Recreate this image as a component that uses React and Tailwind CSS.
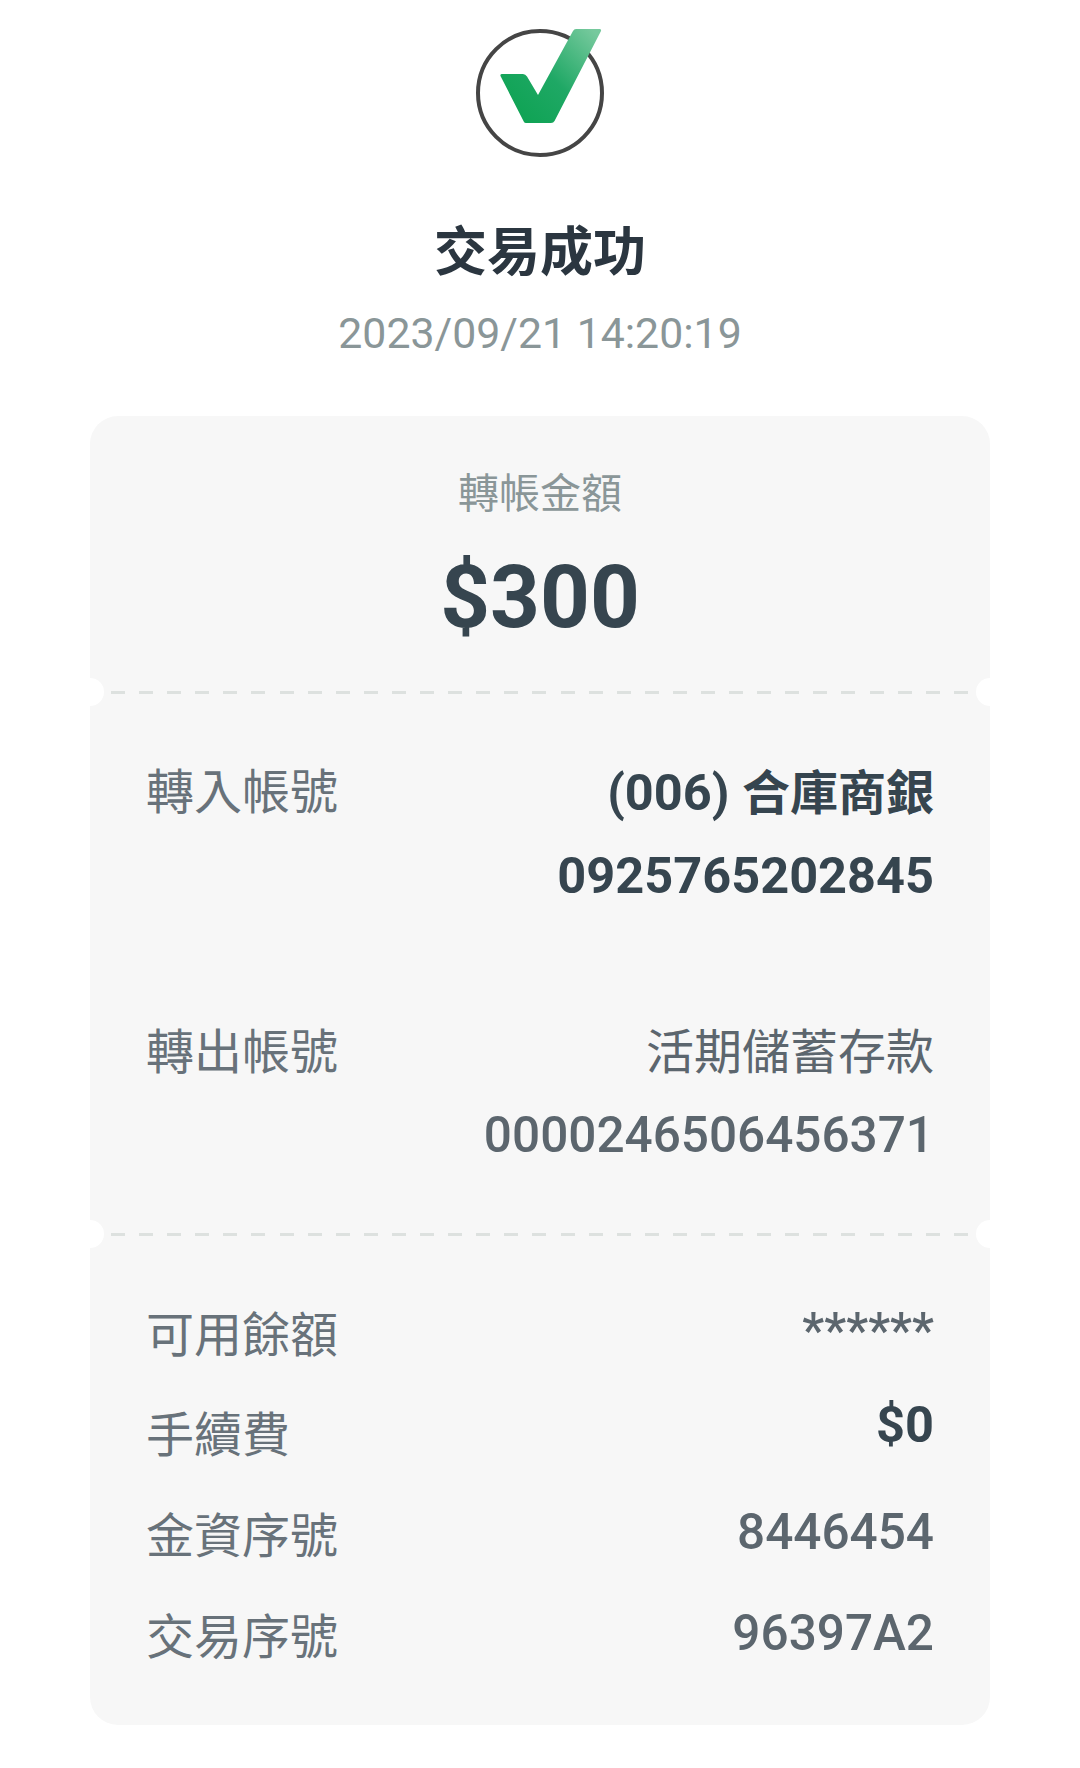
import React from "react";

const font = { fontFamily: '"Roboto", "Noto Sans CJK TC", sans-serif' };

function CheckIcon() {
  return (
    <svg width="128" height="128" viewBox="476 29 128 128" className="block">
      <defs>
        <linearGradient id="tick" x1="0.1" y1="0.85" x2="0.95" y2="0.05">
          <stop offset="0" stopColor="#0fa354" />
          <stop offset="0.45" stopColor="#1fa865" />
          <stop offset="1" stopColor="#76c99d" />
        </linearGradient>
      </defs>
      <circle cx="540" cy="93" r="62" fill="none" stroke="#454545" strokeWidth="4" />
      <path
        d="M500.5 76 Q500 74 502 74 L523 74 Q525.5 74 527 76.5 L538 95 L573 31 Q574 29 576 29 L599.5 29 Q601.5 29 601 31 L554.5 121 Q553.5 123 551 123 L526 123 Q524.5 123 524 122 Z"
        fill="url(#tick)"
      />
    </svg>
  );
}

function Divider() {
  return (
    <div className="relative h-[3px]">
      <div className="absolute left-[-1px] top-[-13px] h-[28px] w-[15px] rounded-r-full bg-white" />
      <div className="absolute right-[-1px] top-[-13px] h-[28px] w-[15px] rounded-l-full bg-white" />
      <div className="ml-[21px] mr-[22px] flex h-[3px] justify-between">
        {Array.from({ length: 31 }).map((_, i) => (
          <span key={i} className="h-[3px] w-[14px] bg-[#dde1df]" />
        ))}
      </div>
    </div>
  );
}

function Row({ label, value, bold, lift = "-mt-[5px]", className = "" }) {
  return (
    <div className={`flex items-start justify-between ${className}`}>
      <span className="text-[48px] leading-[60px] text-[#68727a]">{label}</span>
      <span className={`leading-[60px] ${lift} ${bold ? "text-[50.5px] font-bold text-[#36454f]" : "text-[49.5px] font-medium text-[#5c666e]"}`}>{value}</span>
    </div>
  );
}

export default function App() {
  return (
    <div className="flex h-[1768px] w-[1080px] flex-col items-center overflow-hidden bg-white" style={font}>
      <div className="mt-[29px]">
        <CheckIcon />
      </div>
      <h1 className="mt-[61px] text-[53px] font-bold leading-[70px] text-[#2b3640]">交易成功</h1>
      <p className="mt-[17px] text-[42.8px] leading-[56px] text-[#8a9698]">2023/09/21 14:20:19</p>

      <div className="mt-[55px] w-[900px] rounded-[28px] bg-[#f7f7f7]">
        <div className="flex h-[275px] flex-col items-center pt-[51px]">
          <p className="text-[41px] leading-[54px] text-[#8a9698]">轉帳金額</p>
          <p className="mt-[26px] text-[87px] font-bold leading-[100px] text-[#36454f]">$300</p>
        </div>
        <Divider />

        <div className="h-[539px] pl-[56px] pr-[56px] pt-[69px]">
          <div className="flex items-start justify-between">
            <span className="text-[48px] leading-[60px] text-[#68727a]">轉入帳號</span>
            <div className="text-right text-[50.5px] font-bold leading-[60px] text-[#36454f]">
              <p>(006) <span className="text-[48px]">合庫商銀</span></p>
              <p className="mt-[22px]">0925765202845</p>
            </div>
          </div>
          <div className="mt-[117px] flex items-start justify-between">
            <span className="text-[48px] leading-[60px] text-[#68727a]">轉出帳號</span>
            <div className="text-right text-[49.5px] font-medium leading-[60px] text-[#5c666e]">
              <p className="text-[48px] font-normal">活期儲蓄存款</p>
              <p className="mt-[22px]">0000246506456371</p>
            </div>
          </div>
        </div>
        <Divider />

        <div className="pb-[57px] pl-[56px] pr-[56px] pt-[70px]">
          <Row label="可用餘額" value="******" />
          <Row label="手續費" value="$0" bold lift="-mt-[11px]" className="mt-[40px]" />
          <Row label="金資序號" value="8446454" className="mt-[41px]" />
          <Row label="交易序號" value="96397A2" className="mt-[41px]" />
        </div>
      </div>
    </div>
  );
}
